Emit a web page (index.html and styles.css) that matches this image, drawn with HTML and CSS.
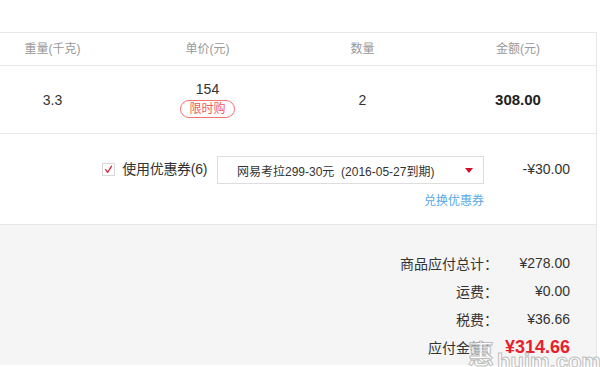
FILE: index.html
```html
<!DOCTYPE html>
<html lang="zh-CN">
<head>
  <meta charset="UTF-8" />
  <meta name="viewport" content="width=device-width, initial-scale=1.0"/>
  <title>订单确认</title>
  <link rel="stylesheet" href="styles.css">
</head>
<body>
  <div class="cart">
    <div class="table">
      <div class="row head">
        <div class="cell">重量(千克)</div>
        <div class="cell">单价(元)</div>
        <div class="cell">数量</div>
        <div class="cell">金额(元)</div>
      </div>
      <div class="row item">
        <div class="cell">3.3</div>
        <div class="cell price">
          <span>154</span>
          <span class="badge">限时购</span>
        </div>
        <div class="cell">2</div>
        <div class="cell total">308.00</div>
      </div>
    </div>

    <div class="coupon">
      <div class="coupon-line">
        <label class="use">
          <span class="check">
            <svg width="11" height="11" viewBox="0 0 11 11">
              <path d="M2.6 5.6 L4.6 8.4 L8.6 2.2" fill="none" stroke="#d9263e" stroke-width="1.3" stroke-linecap="round" stroke-linejoin="round"/>
            </svg>
          </span>
          <span class="use-text">使用优惠券(6)</span>
        </label>
        <div class="select">
          <span>网易考拉299-30元&nbsp;&nbsp;(2016-05-27到期)</span>
          <span class="arrow"></span>
        </div>
        <div class="discount">-¥30.00</div>
      </div>
      <a class="exchange" href="#">兑换优惠券</a>
    </div>

    <div class="summary">
      <div class="sum-row"><span class="label">商品应付总计：</span><span class="value">¥278.00</span></div>
      <div class="sum-row"><span class="label">运费：</span><span class="value">¥0.00</span></div>
      <div class="sum-row"><span class="label">税费：</span><span class="value">¥36.66</span></div>
      <div class="sum-row pay"><span class="label">应付金额：</span><span class="value">¥314.66</span></div>
    </div>
  </div>

  <div class="watermark"><span class="wm-cn">惠喵</span><span class="wm-en">huim.com</span></div>
</body>
</html>
```

FILE: styles.css
```css
body {
  margin: 0;
  background: #fff;
  font-family: "Liberation Sans", "Noto Sans CJK SC", sans-serif;
  color: #333;
  overflow: hidden;
}
.cart {
  width: 597px;
  margin-top: 32px;
  border-right: 1px solid #e6e6e6;
  box-sizing: border-box;
}
.table {
  margin-left: -25px;
  width: 621px;
  border-top: 1px solid #e8e8e8;
}
.row {
  display: grid;
  grid-template-columns: 155px 155px 155px 156px;
  border-bottom: 1px solid #e8e8e8;
}
.cell {
  display: flex;
  flex-direction: column;
  align-items: center;
  justify-content: center;
  text-align: center;
}
.head { height: 32px; }
.head .cell {
  font-size: 12px;
  color: #999;
  line-height: 16px;
}
.item { height: 67px; }
.item .cell {
  font-size: 14px;
  line-height: 16px;
}
.price span:first-child { margin-top: -1px; }
.badge {
  margin-top: 3px;
  padding: 0 8px;
  height: 16px;
  line-height: 16px;
  font-size: 12px;
  color: #f25a5a;
  border: 1px solid #f47272;
  border-radius: 9px;
}
.item .total {
  font-size: 15px;
  font-weight: bold;
  color: #222;
}

.coupon {
  height: 91px;
  padding: 22px 26px 0 0;
  box-sizing: border-box;
  border-bottom: 1px solid #e6e6e6;
  display: flex;
  flex-direction: column;
  align-items: flex-end;
}
.coupon-line {
  display: flex;
  align-items: center;
  height: 28px;
}
.use {
  display: flex;
  align-items: center;
  font-size: 14px;
  line-height: 16px;
  color: #333;
  margin-right: 10px;
  margin-top: -2px;
}
.use-text { letter-spacing: -0.3px; }
.check {
  width: 11px;
  height: 11px;
  border: 1px solid #d8d8d8;
  margin-right: 7px;
  display: flex;
  align-items: center;
  justify-content: center;
}
.check svg { display: block; flex: none; }
.select {
  width: 267px;
  height: 28px;
  box-sizing: border-box;
  border: 1px solid #ddd;
  display: flex;
  align-items: center;
  justify-content: space-between;
  padding: 0 10px 0 19px;
  font-size: 12px;
  color: #333;
}
.arrow {
  width: 0;
  height: 0;
  border-left: 4px solid transparent;
  border-right: 4px solid transparent;
  border-top: 5px solid #d0112b;
  margin-top: 1px;
}
.discount {
  width: 86px;
  text-align: right;
  font-size: 14px;
  color: #333;
  margin-top: -3px;
}
.exchange {
  margin-right: 86px;
  margin-top: 9px;
  font-size: 12px;
  line-height: 16px;
  color: #5aa8e6;
  text-decoration: none;
}

.summary {
  background: #f5f5f5;
  height: 140px;
  padding: 24px 26px 0 0;
  box-sizing: border-box;
}
.sum-row {
  display: flex;
  justify-content: flex-end;
  align-items: center;
  height: 28px;
  font-size: 14px;
  color: #333;
}
.sum-row .label {
  text-align: right;
}
.sum-row .value {
  width: 72px;
  text-align: right;
}
.pay .value {
  font-size: 18px;
  font-weight: bold;
  color: #e8202b;
}

.watermark {
  position: absolute;
  left: 468px;
  top: 339px;
  height: 28px;
  overflow: hidden;
  display: flex;
  align-items: flex-start;
  gap: 3px;
  color: #fff;
  pointer-events: none;
  -webkit-text-stroke: 1px #b5b5b5;
  opacity: 0.85;
}
.wm-cn {
  font-size: 26px;
  font-weight: bold;
  line-height: 32px;
}
.wm-en {
  font-size: 22px;
  font-weight: bold;
  line-height: 26px;
  margin-top: 10px;
  font-family: "Liberation Sans", sans-serif;
}
```
